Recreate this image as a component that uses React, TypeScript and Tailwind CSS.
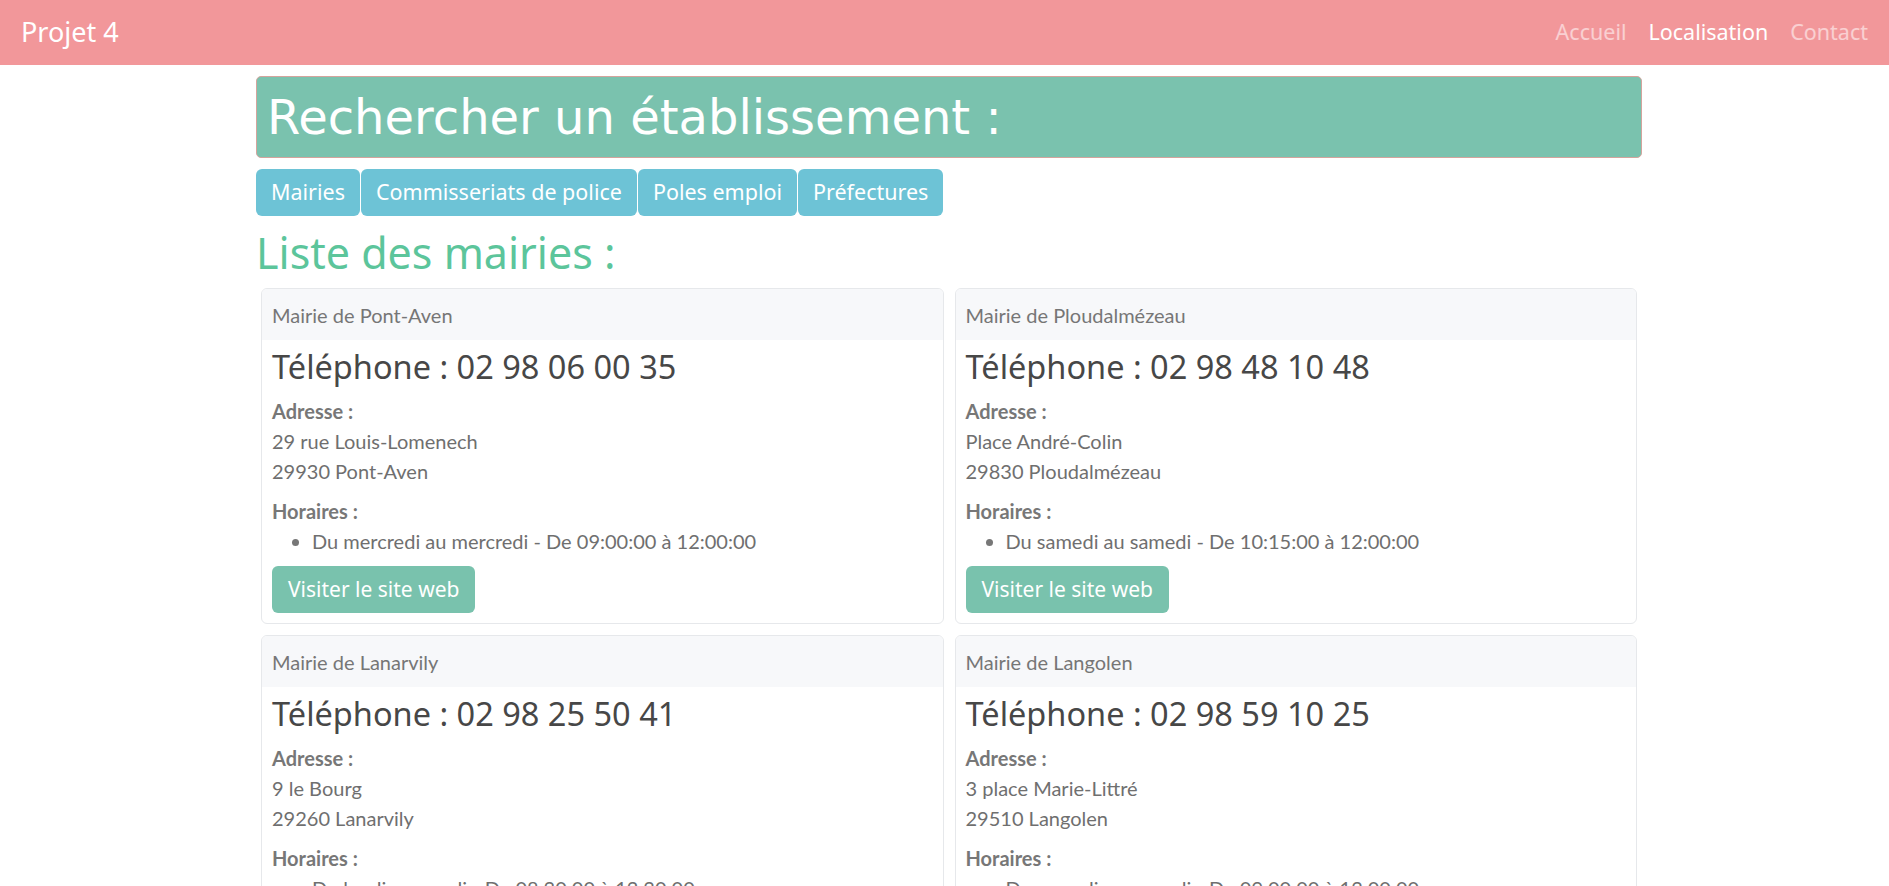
import React from 'react';

type Mairie = {
  name: string;
  phone: string;
  street: string;
  city: string;
  horaire: string;
};

const mairies: Mairie[] = [
  {
    name: 'Mairie de Pont-Aven',
    phone: '02 98 06 00 35',
    street: '29 rue Louis-Lomenech',
    city: '29930 Pont-Aven',
    horaire: 'Du mercredi au mercredi - De 09:00:00 à 12:00:00',
  },
  {
    name: 'Mairie de Ploudalmézeau',
    phone: '02 98 48 10 48',
    street: 'Place André-Colin',
    city: '29830 Ploudalmézeau',
    horaire: 'Du samedi au samedi - De 10:15:00 à 12:00:00',
  },
  {
    name: 'Mairie de Lanarvily',
    phone: '02 98 25 50 41',
    street: '9 le Bourg',
    city: '29260 Lanarvily',
    horaire: 'Du lundi au mardi - De 08:30:00 à 12:30:00',
  },
  {
    name: 'Mairie de Langolen',
    phone: '02 98 59 10 25',
    street: '3 place Marie-Littré',
    city: '29510 Langolen',
    horaire: 'Du samedi au samedi - De 09:00:00 à 12:00:00',
  },
];

const mont = "font-['Noto_Sans',sans-serif]";

const MairieCard: React.FC<Mairie> = ({ name, phone, street, city, horaire }) => {
  return (
    <div className="overflow-hidden rounded-[6px] border border-[#e6e8eb] bg-white">
      <div className="flex h-[51px] items-center bg-[#f7f8fa] px-[10px] text-[20px] text-[#767676]">
        {name}
      </div>
      <div className="px-[10px] pt-[9px] pb-[10px]">
        <h4 className={`${mont} text-[32.5px] leading-[36px] text-[#474747]`}>
          Téléphone : {phone}
        </h4>
        <p className="mt-[11px] text-[20px] leading-[30px] font-bold text-[#777]">Adresse :</p>
        <p className="text-[20px] leading-[30px] text-[#6f6f6f]">{street}</p>
        <p className="text-[20px] leading-[30px] text-[#6f6f6f]">{city}</p>
        <p className="mt-[10px] text-[20px] leading-[30px] font-bold text-[#777]">Horaires :</p>
        <ul className="list-disc pl-[40px] text-[20px] leading-[30px] text-[#6f6f6f] marker:text-[#777]">
          <li>{horaire}</li>
        </ul>
        <button
          className={`${mont} mt-[10px] h-[47px] rounded-[6px] bg-[#79c2ad] px-[16px] text-[21px] text-white`}
        >
          Visiter le site web
        </button>
      </div>
    </div>
  );
};

const tabs = ['Mairies', 'Commisseriats de police', 'Poles emploi', 'Préfectures'];

export default function App() {
  return (
    <div className="h-[886px] overflow-hidden bg-white font-['Lato',sans-serif]">
      <nav className={`${mont} flex h-[65px] items-center justify-between bg-[#f2979a] px-[21px]`}>
        <span className="text-[27px] text-white">Projet 4</span>
        <div className="flex gap-[22px] text-[21.5px]">
          <span className="text-white/55">Accueil</span>
          <span className="text-white">Localisation</span>
          <span className="text-white/55">Contact</span>
        </div>
      </nav>

      <main className="ml-[256px] w-[1386px]">
        <div className="mt-[11px] flex h-[82px] items-center rounded-[5px] border border-[#d4a49d] bg-[#7ac2ae] px-[10px]">
          <h1 className="font-['DejaVu_Sans',sans-serif] text-[48px] text-white">Rechercher un établissement :</h1>
        </div>

        <div className={`${mont} mt-[11px] flex gap-[1px]`}>
          {tabs.map((t) => (
            <button key={t} className="h-[47px] rounded-[6px] bg-[#6dc3d6] px-[15px] text-[21.5px] text-white">
              {t}
            </button>
          ))}
        </div>

        <h2 className={`${mont} mt-[2px] text-[43px] leading-[70px] text-[#5cc59b]`}>Liste des mairies :</h2>

        <div className="grid grid-cols-2 gap-[11px] px-[5px]">
          {mairies.map((m) => (
            <MairieCard key={m.name} {...m} />
          ))}
        </div>
      </main>
    </div>
  );
}
